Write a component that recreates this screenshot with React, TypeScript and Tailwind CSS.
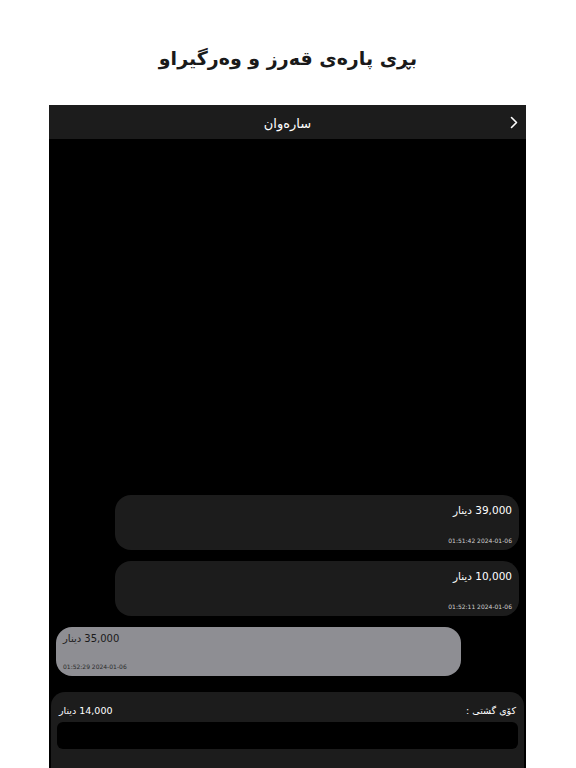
export default function App() {
  const font = { fontFamily: '"DejaVu Sans", "Noto Sans", sans-serif' };
  return (
    <div className="h-[768px] overflow-hidden bg-white flex flex-col items-center" style={font}>
      <h1 dir="rtl" className="mt-[40px] h-[36px] text-[19px] font-bold text-[#1a1a1a] leading-[36px]">
        بڕی پارەی قەرز و وەرگیراو
      </h1>
      <div className="mt-[29px] w-[477px] ml-[-1px] flex-1 flex flex-col bg-black">
        <div className="h-[34px] bg-[#1c1c1c] relative flex items-center justify-center pt-[3px]">
          <span dir="rtl" className="text-[13px] text-white">سارەوان</span>
          <svg className="absolute right-[7px] top-[11px]" width="10" height="13" viewBox="0 0 10 13" fill="none">
            <path d="M2.5 1.5 L7.5 6.5 L2.5 11.5" stroke="white" strokeWidth="1.6" strokeLinecap="round" strokeLinejoin="round" />
          </svg>
        </div>
        <div className="flex-1 flex flex-col justify-end px-[7px] pb-[16px] gap-[11px]">
          <Bubble amount="39,000" time="01:51:42 2024-01-06" mine />
          <Bubble amount="10,000" time="01:52:11 2024-01-06" mine />
          <Bubble amount="35,000" time="01:52:29 2024-01-06" />
        </div>
        <div className="h-[76px] mx-[2px] bg-[#1c1c1c] rounded-t-[14px] px-[6px] pt-[12px]">
          <div dir="rtl" className="flex justify-between items-center h-[14px] px-[2px] text-[9.5px] text-white">
            <span>کۆی گشتی :</span>
            <span>14,000 دینار</span>
          </div>
          <div className="mt-[4px] h-[27px] bg-black rounded-[6px]" />
        </div>
      </div>
    </div>
  );
}

function Bubble({ amount, time, mine }: { amount: string; time: string; mine?: boolean }) {
  return (
    <div
      className={
        mine
          ? "self-end w-[404px] h-[55px] rounded-[16px] bg-[#1c1c1c] flex flex-col items-end justify-between pt-[8px] pb-[5px] px-[7px]"
          : "self-start w-[405px] h-[49px] rounded-[16px] bg-[#8e8e93] flex flex-col items-start justify-between pt-[4px] pb-[5px] px-[7px]"
      }
    >
      <span dir="rtl" className={mine ? "text-[10.5px] text-white" : "text-[10px] text-[#1a1a1a]"}>
        {amount} دینار
      </span>
      <span dir="ltr" className={mine ? "text-[6px] text-[#d0d0d0]" : "text-[6px] text-[#2a2a2a]"}>
        {time}
      </span>
    </div>
  );
}
